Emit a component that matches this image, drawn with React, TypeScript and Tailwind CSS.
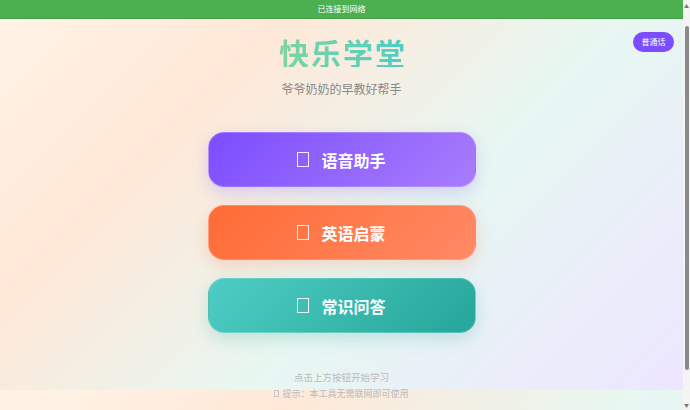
import React from 'react';

const modes = [
  { label: '语音助手', bg: 'bg-[linear-gradient(135deg,#7c4dff_0%,#a87dfb_100%)]', shadow: 'shadow-[0_6px_16px_rgba(124,77,255,0.22)]' },
  { label: '英语启蒙', bg: 'bg-[linear-gradient(135deg,#ff6b35_0%,#ff8a65_100%)]', shadow: 'shadow-[0_6px_16px_rgba(255,107,53,0.22)]' },
  { label: '常识问答', bg: 'bg-[linear-gradient(135deg,#4ecdc4_0%,#26a69a_100%)]', shadow: 'shadow-[0_6px_16px_rgba(38,166,154,0.22)]' }
];

// missing-glyph box, as the emoji shows up in the screenshot
function Tofu({ className }: { className: string }) {
  return <span className={`inline-block border box-border ${className}`} />;
}

export default function App() {
  return (
    <div className="flex h-screen overflow-hidden font-['Noto_Sans_CJK_SC','Noto_Sans',sans-serif]">
      <div className="relative flex-1 bg-[linear-gradient(135deg,#fff4e8_0%,#ffe8d7_28%,#e7f7f2_60%,#ede6ff_100%)] bg-[length:100%_390px]">
        {/* Network status */}
        <div className="h-[19px] bg-[#4caf50] border-b border-[#43a047] flex items-center justify-center text-[8px] text-white">
          已连接到网络
        </div>

        <button className="absolute top-[32px] right-[9px] w-[41px] h-[20px] rounded-full bg-[#7c4dff] text-white text-[8px] flex items-center justify-center">
          普通话
        </button>

        <div className="flex flex-col items-center pt-[18px]">
          <h1 className="text-[30px] leading-none font-bold tracking-[2px] pl-[3px] bg-[linear-gradient(90deg,#80d4a0_0%,#4ecdc4_100%)] bg-clip-text text-transparent">
            快乐学堂
          </h1>
          <p className="mt-[16px] text-[12px] leading-none text-[#888888]">爷爷奶奶的早教好帮手</p>

          <div className="mt-[37px] flex flex-col gap-[18px]">
            {modes.map((m) => (
              <button
                key={m.label}
                className={`w-[268px] h-[55px] rounded-2xl border border-white/20 flex items-center justify-center gap-[12px] text-white ${m.bg} ${m.shadow}`}
              >
                <Tofu className="w-[12px] h-[15px] border-white/90" />
                <span className="text-[16px] font-bold leading-none">{m.label}</span>
              </button>
            ))}
          </div>

          <p className="mt-[40px] text-[9.5px] leading-none text-[#bbbbbb]">点击上方按钮开始学习</p>
          <p className="mt-[6px] text-[9px] leading-none text-[#bbbbbb] flex items-center gap-[3px]">
            <Tofu className="w-[5px] h-[7px] border-[#c8c8c8]" />
            提示：本工具无需联网即可使用
          </p>
        </div>
      </div>

      {/* scrollbar */}
      <div className="w-[7px] bg-[#f4f4f4] flex flex-col items-center">
        <span className="mt-[3px] text-[5px] leading-none text-[#777]">▲</span>
        <div className="mt-[18px] w-[4px] h-[344px] rounded-full bg-[#8a8a8a]" />
        <div className="flex-1" />
        <span className="mb-[3px] text-[5px] leading-none text-[#777]">▼</span>
      </div>
    </div>
  );
}
